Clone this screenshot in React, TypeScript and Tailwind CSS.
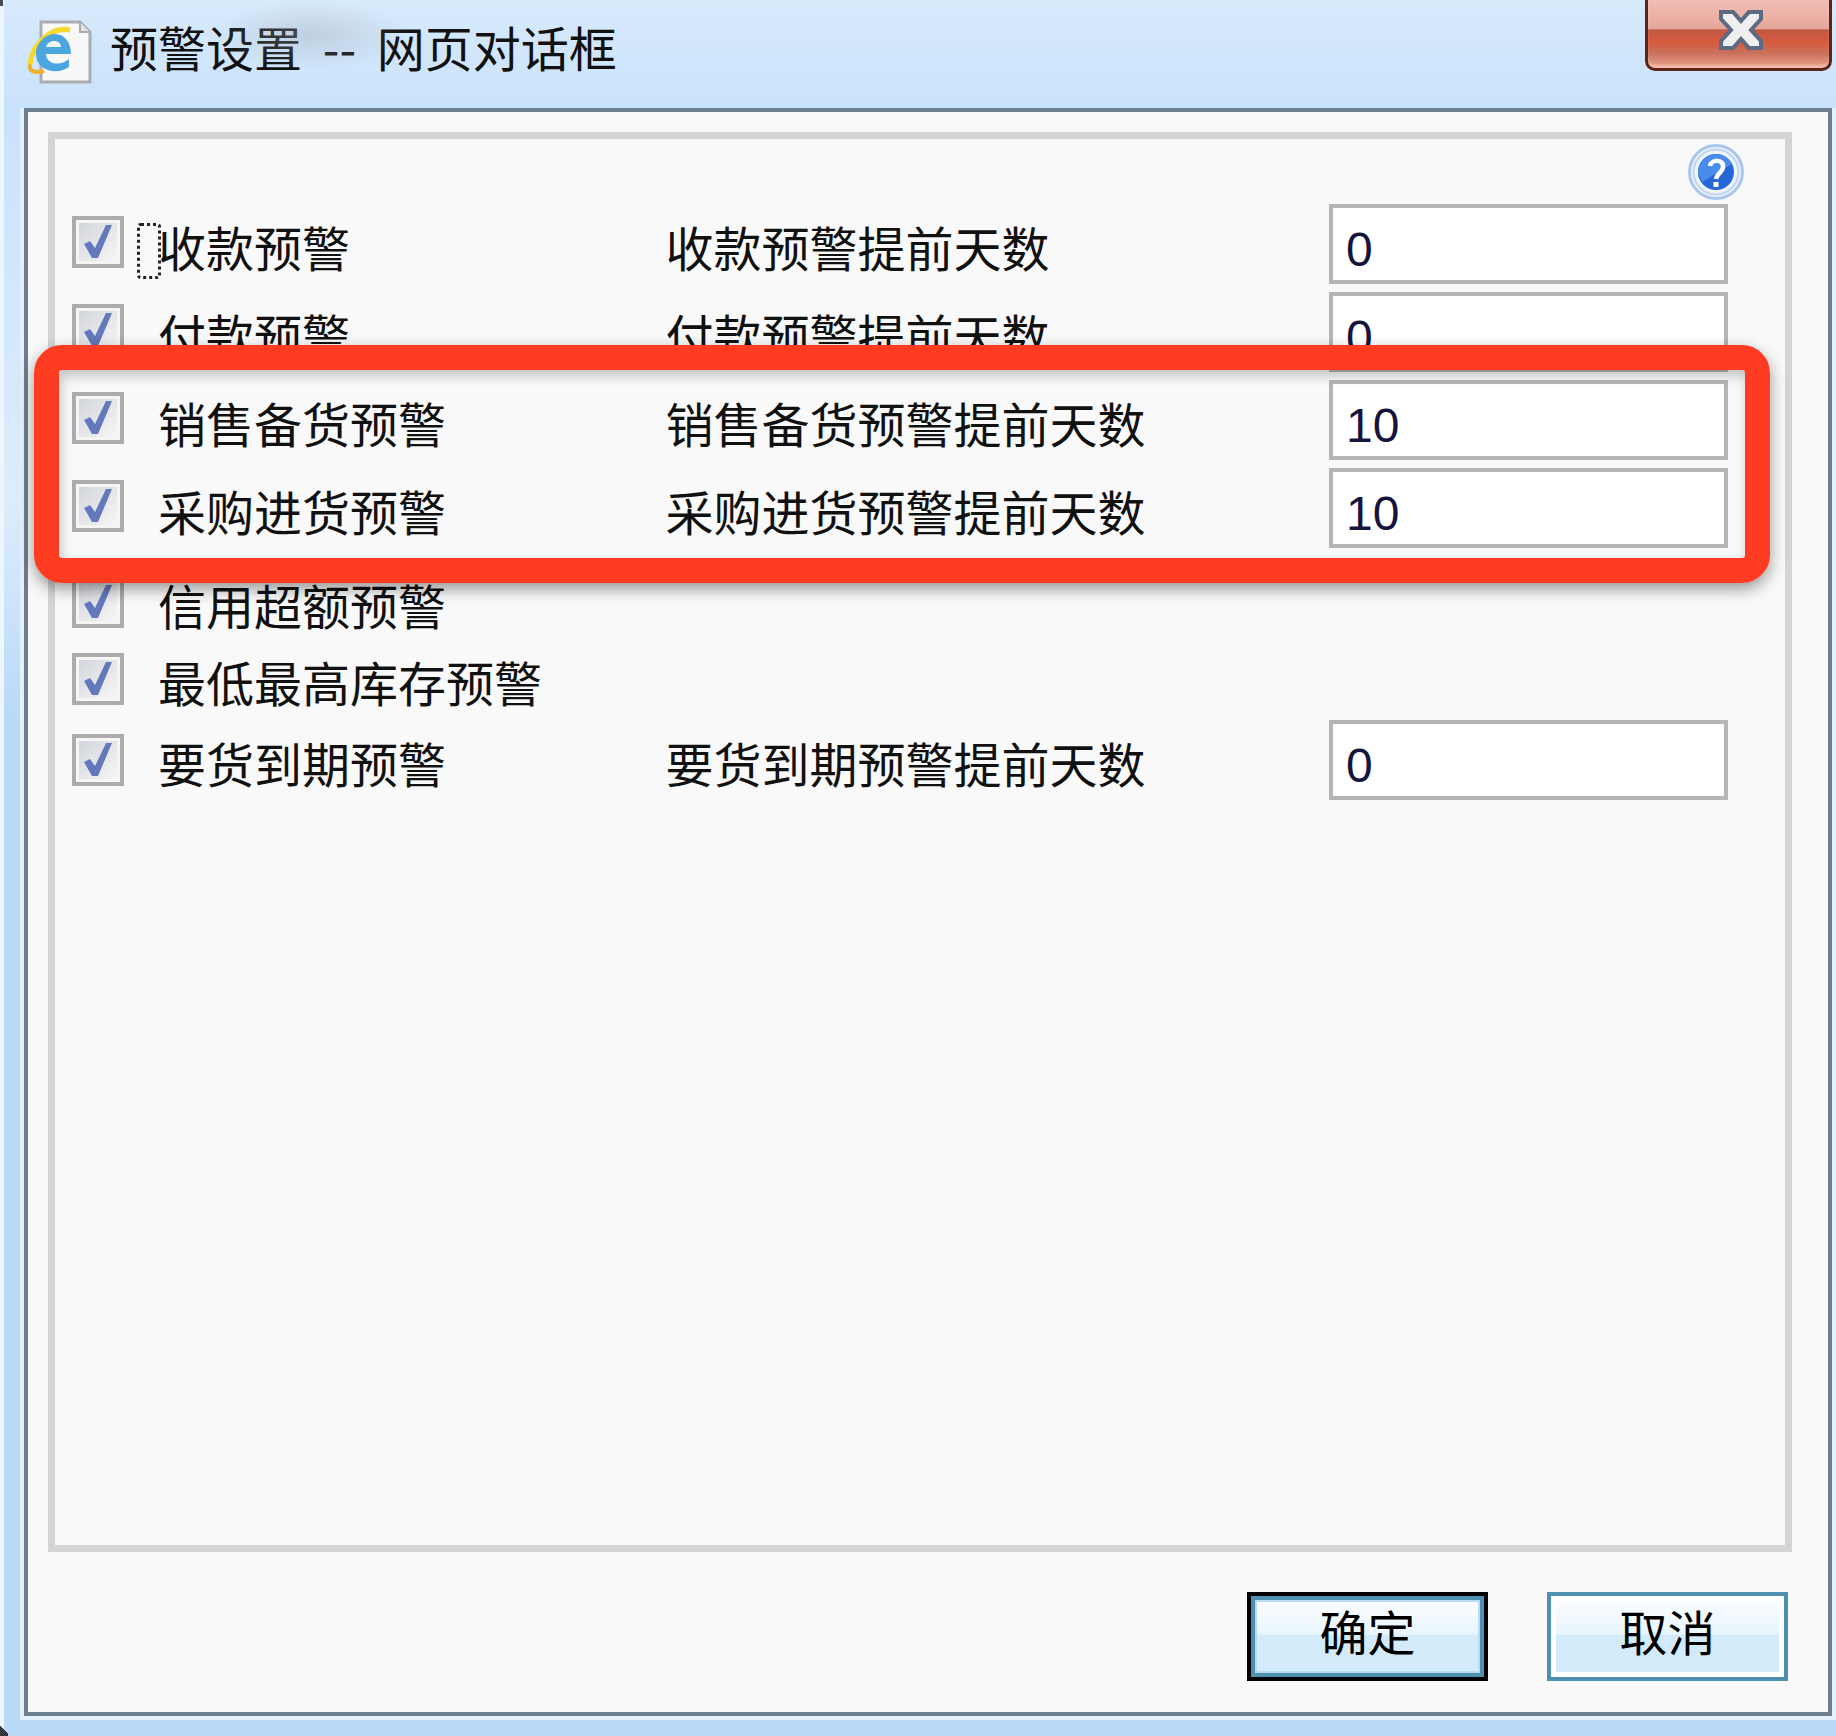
const cjk = "font-['Noto_Sans_CJK_SC','Liberation_Sans',sans-serif]";

interface Row {
    label: string;
    height: string;
    days?: string;
    value?: string;
    lower?: boolean;
    focus?: boolean;
}

const rows: Row[] = [
    { label: '收款预警', days: '收款预警提前天数', value: '0', height: 'h-[88px]', focus: true },
    { label: '付款预警', days: '付款预警提前天数', value: '0', height: 'h-[88px]' },
    { label: '销售备货预警', days: '销售备货预警提前天数', value: '10', height: 'h-[88px]' },
    { label: '采购进货预警', days: '采购进货预警提前天数', value: '10', height: 'h-[88px]' },
    { label: '信用超额预警', height: 'h-[77px]', lower: true },
    { label: '最低最高库存预警', height: 'h-[81px]', lower: true },
    { label: '要货到期预警', days: '要货到期预警提前天数', value: '0', height: 'h-[88px]', lower: true },
];

function Check() {
    return (
        <div className="w-[52px] h-[52px] shrink-0 border-4 border-[#acacac] bg-[#f6f6f6] p-[3px]">
            <div className="w-full h-full bg-[linear-gradient(135deg,#d2d5dc,#f6f6f6)]">
                <svg width="38" height="38" viewBox="3 3 38 38" className="overflow-visible">
                    <path d="M8 24 L14 21 L19 28 L30 5 L36 5 L22 38 L16 38 Z" fill="#6479bb" />
                </svg>
            </div>
        </div>
    );
}

function IeIcon() {
    return (
        <svg width="64" height="64" viewBox="0 0 64 64" className="shrink-0">
            <path d="M13 2 H52 L62 12 V62 H13 Z" fill="#f7f7f7" stroke="#a9adb2" strokeWidth="3" />
            <path d="M52 2 V12 H62" fill="#dfe2e6" stroke="#a9adb2" strokeWidth="2" />
            <path d="M2 44 C4 24 24 6 42 10" fill="none" stroke="#f6d92c" strokeWidth="5" />
            <path d="M2 44 C0 52 8 53 16 51" fill="none" stroke="#f0b12a" strokeWidth="4" />
            <path fillRule="evenodd" d="M8 34 C8 22 18 14 27 14 C37 14 43 23 43 34 H18 C18 44 32 47 41 39 V47 C28 56 8 50 8 34 Z M18 27 H33 C33 19 20 19 18 27 Z" fill="#4ba6e0" />
        </svg>
    );
}

function HelpIcon() {
    return (
        <svg width="56" height="56" viewBox="0 0 56 56">
            <circle cx="28" cy="28" r="26.5" fill="#eef4fc" stroke="#a9c7ee" strokeWidth="3" />
            <circle cx="28" cy="28" r="22.5" fill="none" stroke="#bcd3f2" strokeWidth="2" />
            <circle cx="28" cy="28" r="18" fill="#2467d8" />
            <path d="M10 28 A18 18 0 0 1 44 20 L 14 38 Z" fill="#4a8cec" />
            <path d="M22 22 C23 15 36 15 35 23 C35 28 29 29 28 35" fill="none" stroke="#fff" strokeWidth="4.5" />
            <rect x="25.5" y="38" width="5" height="5" fill="#fff" />
        </svg>
    );
}

function CloseGlyph() {
    return (
        <svg width="46" height="42" viewBox="0 0 46 42">
            <path d="M3 3 H15 L23 12 L31 3 H43 V10 L33 21 L43 32 V39 H31 L23 30 L15 39 H3 V32 L13 21 L3 10 Z" fill="#efefef" stroke="#5c6a84" strokeWidth="4" />
        </svg>
    );
}

function Btn({ label, active }: { label: string; active?: boolean }) {
    return (
        <button className={`w-[241px] h-[89px] ${active ? 'border-4 border-black' : ''}`}>
            <div className="h-full border-4 border-[#4f8fb0]">
                <div className={`h-full flex items-center justify-center pb-[14px] text-[48px] text-black ${cjk} ${active ? 'border-2 border-[#b8dcf2]' : 'border-[5px] border-white'} bg-[linear-gradient(#fbfdff_0%,#e8f4fc_47%,#d3eafa_48%,#d3eafa_100%)]`}>
                    {label}
                </div>
            </div>
        </button>
    );
}

export default function App() {
    return (
        <div className={`relative w-[1836px] h-[1736px] flex flex-col overflow-hidden pl-[24px] pr-[4px] pb-[20px] bg-[linear-gradient(180deg,#dcedfc_0px,#c9e2fb_110px,#dcedfc_500px,#b9d9f7_720px,#b9d9f7_100%)] ${cjk}`}>
            {/* Title bar */}
            <div className="relative h-[108px] shrink-0 -ml-[24px] -mr-[4px] flex items-start bg-[linear-gradient(180deg,#d8eafc,#c9e2fb)]">
                <div className="ml-[28px] mt-[20px]"><IeIcon /></div>
                <div className="ml-[18px] mt-[11px] text-[48px] leading-[70px] text-[#111] whitespace-pre [word-spacing:10px]">预警设置 -- 网页对话框</div>
                <div className="absolute left-[210px] top-0 w-[200px] h-[70px] bg-[radial-gradient(ellipse,rgba(160,170,180,0.4),transparent_70%)]" />
                <div className="ml-auto mr-[4px] w-[187px] h-[71px] rounded-b-[10px] border-[3px] border-t-0 border-[#5c2418] flex items-start justify-center pt-[9px] pl-[5px] shadow-[inset_0_-3px_2px_rgba(255,255,255,0.3)] bg-[linear-gradient(180deg,#f2bdb3_0%,#e6a79b_42%,#c05a42_44%,#d85a3e_62%,#c9705c_78%,#eda48f_100%)]">
                    <CloseGlyph />
                </div>
            </div>

            {/* Pale window edge and corners */}
            <div className="absolute left-0 top-0 bottom-0 w-[4px] bg-[#eef6fd]" />
            <div className="absolute left-0 top-0 w-[3px] h-[6px] bg-[#4a4f55]" />
            <div className="absolute left-0 bottom-0 w-[8px] h-[14px] bg-[linear-gradient(45deg,#33383d_50%,transparent_50%)]" />

            {/* Dialog body */}
            <div className="flex-1 border-4 border-[#6c7e8f] bg-[#f9f9f9] pt-[20px] pl-[20px] pr-[36px] flex flex-col outline-4 outline-[#e4f0fb]">
                <div className="relative h-[1420px] border-[7px] border-[#d4d4d4] pl-[17px] pr-[57px] pt-[65px] text-[48px] text-[#111]">
                    <div className="absolute right-[41px] top-[5px]"><HelpIcon /></div>
                    {rows.map(row => (
                        <div key={row.label} className={`${row.height} flex items-start`}>
                            <div className={row.lower ? 'pt-[20px]' : 'pt-[12px]'}><Check /></div>
                            <div className={`relative w-[508px] ml-[34px] leading-[70px] ${row.lower ? 'pt-[13px]' : 'pt-[7px]'}`}>
                                {row.focus && <div className="absolute -left-[21px] top-[19px] w-[24px] h-[56px] border-[3px] border-dotted border-[#222] rounded-[4px]" />}
                                {row.label}
                            </div>
                            {row.days && (
                                <>
                                    <div className={`w-[664px] leading-[70px] ${row.lower ? 'pt-[13px]' : 'pt-[7px]'}`}>{row.days}</div>
                                    <div className={`w-[399px] h-[80px] shrink-0 border-4 border-[#b5b5b5] bg-white pl-[13px] flex items-center font-['Liberation_Sans',sans-serif] text-[#14143c] ${row.lower ? 'mt-[6px]' : ''}`}>
                                        <span className="pt-[11px]">{row.value}</span>
                                    </div>
                                </>
                            )}
                        </div>
                    ))}
                </div>

                <div className="flex justify-end gap-[59px] mt-[40px] mr-[4px]">
                    <Btn label="确定" active />
                    <Btn label="取消" />
                </div>
            </div>

            {/* Red highlight drawn over the screenshot */}
            <div className="absolute left-[34px] top-[345px] w-[1736px] h-[238px] border-[25px] border-[#ff3b21] rounded-[28px] shadow-[0_6px_16px_rgba(0,0,0,0.4),inset_2px_6px_12px_rgba(0,0,0,0.22)]" />
        </div>
    );
}
